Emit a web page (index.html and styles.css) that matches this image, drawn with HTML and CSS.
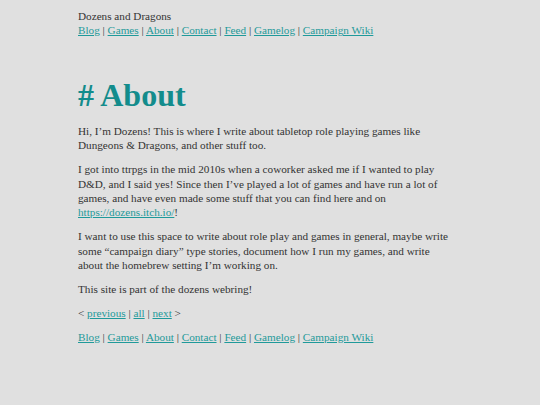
FILE: index.html
```html
<!DOCTYPE html>
<html>
<head>
<meta charset="utf-8">
<link rel="stylesheet" href="styles.css">
</head>
<body>
<div class="page">
  <header class="site-header">
    <div class="site-title">Dozens and Dragons</div>
    <nav class="nav"><a href="#">Blog</a> | <a href="#">Games</a> | <a href="#">About</a> | <a href="#">Contact</a> | <a href="#">Feed</a> | <a href="#">Gamelog</a> | <a href="#">Campaign Wiki</a></nav>
  </header>
  <main>
    <h1 class="title"># About</h1>
    <p>Hi, I’m Dozens! This is where I write about tabletop role playing games like Dungeons &amp; Dragons, and other stuff too.</p>
    <p>I got into ttrpgs in the mid 2010s when a coworker asked me if I wanted to play D&amp;D, and I said yes! Since then I’ve played a lot of games and have run a lot of games, and have even made some stuff that you can find here and on <a href="#">https://dozens.itch.io/</a>!</p>
    <p>I want to use this space to write about role play and games in general, maybe write some “campaign diary” type stories, document how I run my games, and write about the homebrew setting I’m working on.</p>
    <p>This site is part of the dozens webring!</p>
    <p>&lt; <a href="#">previous</a> | <a href="#">all</a> | <a href="#">next</a> &gt;</p>
  </main>
  <footer>
    <nav class="nav"><a href="#">Blog</a> | <a href="#">Games</a> | <a href="#">About</a> | <a href="#">Contact</a> | <a href="#">Feed</a> | <a href="#">Gamelog</a> | <a href="#">Campaign Wiki</a></nav>
  </footer>
</div>
</body>
</html>
```
FILE: styles.css
```css
html { background: #e0e0e0; }
body {
  margin: 0;
  background: #e0e0e0;
  color: #333;
  font-family: "Liberation Serif", serif;
  font-size: 11.2px;
  line-height: 14.4px;
}
.page {
  width: 379px;
  margin: 0 auto 0 78px;
  padding-top: 9px;
}
a { color: #1f9a9a; }
.title {
  color: #138c8c;
  font-size: 32px;
  line-height: 38px;
  margin: 38px 0 10px;
}
p { margin: 0 0 9.5px; }
footer { margin-top: 9.5px; }
```
